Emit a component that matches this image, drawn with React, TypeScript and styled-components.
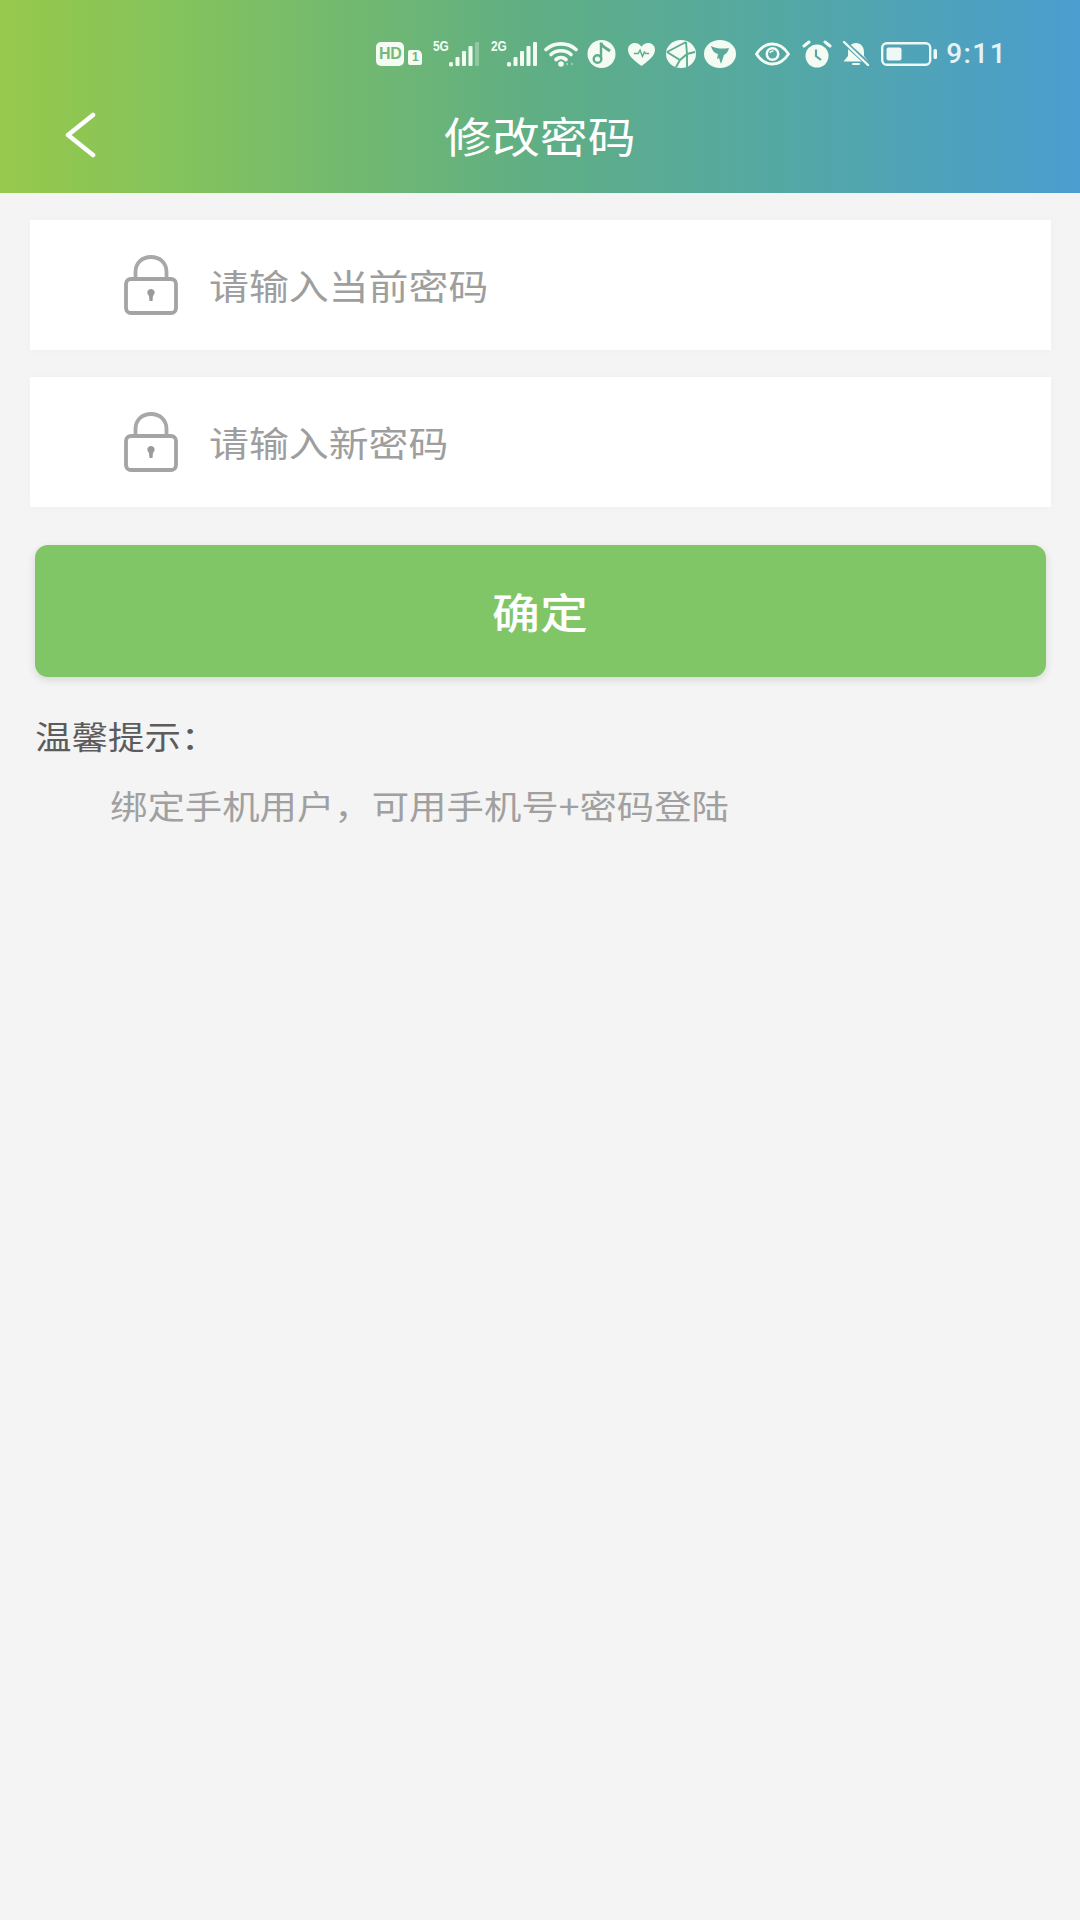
import React from 'react'
import styled, { createGlobalStyle, css } from 'styled-components'

const CJK = `"Noto Sans CJK SC", "Noto Sans", sans-serif`

// the reference text is a little wider than the font, same factor everywhere
const wide = css`
  display: inline-block;
  transform: scaleX(1.14);
  transform-origin: left center;
`

const GlobalStyle = createGlobalStyle`
  html, body {
    margin: 0;
    padding: 0;
    background: #f4f4f4;
  }
  * {
    box-sizing: border-box;
  }
`

const Page = styled.div`
  width: 1080px;
  height: 1920px;
  background: #f4f4f4;
  font-family: ${CJK};
  overflow: hidden;
`

const Header = styled.header`
  height: 193px;
  background: linear-gradient(90deg, #97c94b 0%, #82c25e 18%, #5fae85 50%, #55a9a0 70%, #4a9dcf 100%);
`

const StatusBar = styled.div`
  height: 88px;
  padding: 20px 73px 0 0;
  display: flex;
  justify-content: flex-end;
  align-items: center;
  color: #f4fbf3;
`

const HdBadge = styled.span`
  width: 28px;
  height: 24px;
  border-radius: 5px;
  background: #f4fbf3;
  color: #74b97a;
  font: 800 16px "Liberation Sans", sans-serif;
  line-height: 24px;
  text-align: center;
  letter-spacing: -0.2px;
`

const SimBadge = styled.span`
  width: 14px;
  height: 15px;
  margin: 7px 11px 0 4px;
  border-radius: 2px 5px 2px 2px;
  background: #f4fbf3;
  color: #6db57f;
  font: 700 12px "Liberation Sans", sans-serif;
  line-height: 15px;
  text-align: center;
`

const SignalGroup = styled.span<{ $gap: number }>`
  position: relative;
  width: 46px;
  height: 26px;
  margin-right: ${(p) => p.$gap}px;
  display: flex;
  justify-content: flex-end;
`

const SignalLabel = styled.span`
  position: absolute;
  left: 0;
  top: -3px;
  font: 700 14px "Liberation Sans", sans-serif;
  line-height: 16px;
  transform: scaleX(0.85);
  transform-origin: left top;
`

const StatusIcon = styled.svg<{ $gap?: number }>`
  display: block;
  flex: none;
  margin-right: ${(p) => p.$gap ?? 10}px;
`

const Time = styled.span`
  font: 500 28px Roboto, sans-serif;
  letter-spacing: 1.4px;
  margin-left: 8px;
  line-height: 32px;
  color: #e6f3f5;
`

const NavBar = styled.div`
  height: 105px;
  padding: 0 0 12px 62px;
  display: grid;
  grid-template-columns: 1fr auto 1fr;
  align-items: center;
`

const BackButton = styled.button`
  justify-self: start;
  padding: 0;
  border: 0;
  background: none;
  display: flex;
`

const TitleBox = styled.div`
  width: 192px;
  margin-left: -63px;
`

const Title = styled.h1`
  ${wide}
  margin: 0;
  color: #fff;
  font-size: 42px;
  font-weight: 400;
  line-height: 60px;
  white-space: nowrap;
`

const Main = styled.main`
  padding: 27px 34px 0 35px;
`

const Field = styled.div`
  height: 130px;
  margin: 0 -5px 27px -5px;
  padding-left: 94px;
  display: flex;
  align-items: center;
  gap: 31px;
  background: #fff;
  box-shadow: 0 0 10px rgba(0, 0, 0, 0.025);
`

const Placeholder = styled.span`
  ${wide}
  color: #9e9e9e;
  font-size: 35px;
  line-height: 48px;
`

const Submit = styled.button`
  display: block;
  width: 100%;
  height: 132px;
  margin-top: 38px;
  padding: 0;
  border: 0;
  border-radius: 13px;
  background: #80c566;
  box-shadow: 0 3px 8px rgba(0, 0, 0, 0.12);
  color: #fff;
  font-family: ${CJK};
  font-size: 42px;
  font-weight: 500;
  line-height: 60px;
`

const SubmitLabel = styled.span`
  display: inline-block;
  transform: scaleX(1.14);
`

const TipTitle = styled.div`
  ${wide}
  display: block;
  margin-top: 35px;
  color: #5c5c5c;
  font-size: 32px;
  line-height: 46px;
  white-space: nowrap;
`

const TipText = styled.div`
  ${wide}
  display: block;
  margin-top: 24px;
  margin-left: 75px;
  color: #a0a0a0;
  font-size: 32.8px;
  line-height: 46px;
  white-space: nowrap;
`

const BARS = [
  { x: 6.5, y: 16 },
  { x: 13, y: 10 },
  { x: 19.5, y: 5 },
  { x: 26, y: 1 },
]

const Signal = ({ dimLast }: { dimLast?: boolean }) => (
  <svg width="30" height="26" viewBox="0 0 30 26" fill="#f4fbf3">
    <rect x="0" y="21" width="4" height="4.500" rx="1.500" />
    {BARS.map((b, i) => (
      <rect
        key={b.x}
        x={b.x}
        y={b.y}
        width="4"
        height={25 - b.y}
        rx="1"
        opacity={dimLast && i === BARS.length - 1 ? 0.3 : 1}
      />
    ))}
  </svg>
)

function LockIcon() {
  return (
    <svg width="54" height="60" viewBox="0 0 54 60" fill="none">
      <path d="M11.500 25V17C11.500 8 18 2 27 2C36 2 42.500 8 42.500 17V25" stroke="#a8a8a8" strokeWidth="3.800" />
      <rect x="2" y="24" width="50" height="34" rx="5" stroke="#a4a4a4" strokeWidth="3.800" />
      <path d="M23.300 37.500C23.300 32.800 30.700 32.800 30.700 37.500C30.700 39 29.500 40 29 41L28.500 46H25.500L25 41C24.500 40 23.300 39 23.300 37.500Z" fill="#9a9a9a" />
    </svg>
  )
}

const App = () => (
  <Page>
    <GlobalStyle />
    <Header>
      <StatusBar>
        <HdBadge>HD</HdBadge>
        <SimBadge>1</SimBadge>
        <SignalGroup $gap={12}>
          <SignalLabel>5G</SignalLabel>
          <Signal dimLast />
        </SignalGroup>
        <SignalGroup $gap={7}>
          <SignalLabel>2G</SignalLabel>
          <Signal />
        </SignalGroup>
        <StatusIcon width="34" height="26" viewBox="0 0 34 26" fill="none" stroke="#f4fbf3" strokeWidth="3.600" strokeLinecap="round" $gap={9}>
          <path d="M2 8.500C10 1 24 1 32 8.500" />
          <path d="M7 13.500C12.500 8.500 21.500 8.500 27 13.500" />
          <path d="M12 18.500C15 16 19 16 22 18.500" />
          <circle cx="17" cy="23" r="2.800" fill="#f4fbf3" stroke="none" />
          <path d="M24 21.500L21.500 23L24 24.500ZM27 21.500L29.500 23L27 24.500Z" fill="#a6d3ad" stroke="none" />
        </StatusIcon>
        <StatusIcon width="29" height="28" viewBox="0 0 29 28" $gap={11}>
          <circle cx="14.500" cy="14" r="14" fill="#f4fbf3" />
          <path d="M14 2.500V19" stroke="#5fad8c" strokeWidth="2.400" fill="none" />
          <path d="M14 3C15 7 19 8 23 11" stroke="#5fad8c" strokeWidth="3" fill="none" />
          <circle cx="10.500" cy="19" r="3.800" fill="none" stroke="#5fad8c" strokeWidth="2.400" />
        </StatusIcon>
        <StatusIcon width="29" height="25" viewBox="0 0 30 26" $gap={10}>
          <path d="M15 25C6 18 1 14 1 8C1 3.500 4.500 1 8 1C11 1 13.500 2.500 15 5C16.500 2.500 19 1 22 1C25.500 1 29 3.500 29 8C29 14 24 18 15 25Z" fill="#f4fbf3" />
          <path d="M7 12H11.500L13.500 8.500L16 15L18 10.500L19.500 12H23" fill="none" stroke="#5fae8c" strokeWidth="1.500" />
        </StatusIcon>
        <StatusIcon width="30" height="28" viewBox="0 0 30 28" $gap={8}>
          <ellipse cx="15" cy="14" rx="15" ry="14" fill="#f4fbf3" />
          <path d="M1 12L20 2M1 12L14 20L21 14L20 2M14 20L10 27M21 14L21 27M21 14L29 12" fill="none" stroke="#5cab93" strokeWidth="1.900" />
        </StatusIcon>
        <StatusIcon width="32" height="28" viewBox="0 0 32 28" $gap={19}>
          <ellipse cx="16" cy="14" rx="16" ry="14" fill="#f4fbf3" />
          <path d="M7 6C13 9 19 9 25 8C24 12 22 14 20 15L17 24L15 18L13 19L14 14C10 13 8 10 7 6Z" fill="#5aa99b" />
        </StatusIcon>
        <StatusIcon width="35" height="24" viewBox="0 0 35 24" $gap={12}>
          <path d="M1.500 12C6 5 11 2 17.500 2C24 2 29 5 33.500 12C29 19 24 22 17.500 22C11 22 6 19 1.500 12Z" fill="none" stroke="#f4fbf3" strokeWidth="2.800" />
          <circle cx="17.500" cy="12" r="7" fill="#f4fbf3" />
          <circle cx="17.500" cy="12" r="4.500" fill="#58aaa4" />
          <path d="M15 11C15.500 9.500 17 9 18.500 9" stroke="#f4fbf3" strokeWidth="1.500" fill="none" />
        </StatusIcon>
        <StatusIcon width="30" height="28" viewBox="0 0 30 28" $gap={10}>
          <circle cx="15" cy="16" r="11.500" fill="#f4fbf3" />
          <path d="M2 6L7 2M28 6L23 2" stroke="#f4fbf3" strokeWidth="3" strokeLinecap="round" />
          <path d="M14 9.500V16L19 20" fill="none" stroke="#56a6ac" strokeWidth="2.200" />
        </StatusIcon>
        <StatusIcon width="28" height="26" viewBox="0 0 28 26" $gap={11}>
          <path d="M14 2C9 2 6 6 6 11V15L1.500 20.500H26.500L22 15V11C22 6 19 2 14 2Z" fill="#f4fbf3" />
          <path d="M11 23H17" stroke="#f4fbf3" strokeWidth="2" strokeLinecap="round" />
          <path d="M3 2L27 24" stroke="#54a5b2" strokeWidth="5" />
          <path d="M2 1L26 24" stroke="#f4fbf3" strokeWidth="2.400" strokeLinecap="round" />
        </StatusIcon>
        <StatusIcon width="57" height="24" viewBox="0 0 57 24" $gap={0}>
          <rect x="1.200" y="1.200" width="48" height="21.600" rx="4.500" fill="none" stroke="#eef8f6" strokeWidth="2.400" />
          <rect x="5.500" y="5.500" width="15" height="13" rx="2" fill="#eef8f6" />
          <rect x="52.500" y="7" width="3.500" height="10" rx="1.500" fill="#eef8f6" />
        </StatusIcon>
        <Time>9:11</Time>
      </StatusBar>
      <NavBar>
        <BackButton aria-label="返回">
          <svg width="36" height="46" viewBox="0 0 36 46" fill="none" stroke="#fff" strokeWidth="4.500" strokeLinecap="round" strokeLinejoin="round">
            <path d="M31 3L6 23L31 43" />
          </svg>
        </BackButton>
        <TitleBox>
          <Title>修改密码</Title>
        </TitleBox>
      </NavBar>
    </Header>
    <Main>
      <Field>
        <LockIcon />
        <Placeholder>请输入当前密码</Placeholder>
      </Field>
      <Field>
        <LockIcon />
        <Placeholder>请输入新密码</Placeholder>
      </Field>
      <Submit>
        <SubmitLabel>确定</SubmitLabel>
      </Submit>
      <TipTitle>温馨提示：</TipTitle>
      <TipText>绑定手机用户，可用手机号+密码登陆</TipText>
    </Main>
  </Page>
)

export default App
